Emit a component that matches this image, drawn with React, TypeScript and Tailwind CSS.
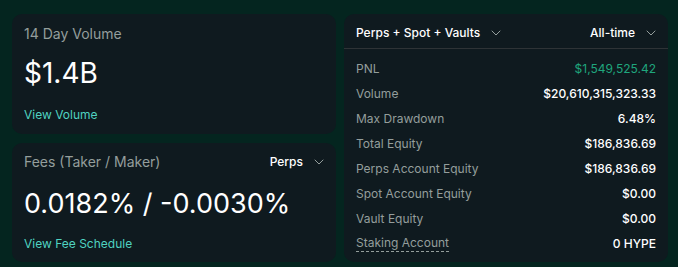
import { ChevronDown } from 'lucide-react';

const FONT = { fontFamily: 'Inter, "Noto Sans", sans-serif' };

interface StatRow {
  label: string;
  value: string;
  tone?: 'green';
  dashed?: boolean;
}

const ROWS: StatRow[] = [
  { label: 'PNL', value: '$1,549,525.42', tone: 'green' },
  { label: 'Volume', value: '$20,610,315,323.33' },
  { label: 'Max Drawdown', value: '6.48%' },
  { label: 'Total Equity', value: '$186,836.69' },
  { label: 'Perps Account Equity', value: '$186,836.69' },
  { label: 'Spot Account Equity', value: '$0.00' },
  { label: 'Vault Equity', value: '$0.00' },
  { label: 'Staking Account', value: '0 HYPE', dashed: true },
];

function Chevron() {
  return <ChevronDown size={16} strokeWidth={1.5} className="ml-2 text-[#949e9c]" />;
}

export default function App() {
  return (
    <div
      className="w-[678px] h-[267px] bg-[#04251f] flex gap-2 pl-3 pt-[14px] overflow-hidden antialiased"
      style={FONT}
    >
      {/* left column */}
      <div className="w-[324px] flex flex-col gap-[9px]">
        <div className="h-[120px] rounded-[10px] bg-[#0f1a1f] px-3 pt-[10px] flex flex-col">
          <div className="text-[14px] leading-5 text-[#949e9c]">14 Day Volume</div>
          <div className="mt-[11px] text-[28px] leading-9 text-white">$1.4B</div>
          <div className="mt-[15px] text-[12px] leading-[18px] text-[#50d2c1]">View Volume</div>
        </div>
        <div className="h-[119px] rounded-[10px] bg-[#0f1a1f] pl-3 pr-[9px] pt-[9px] flex flex-col">
          <div className="flex items-center justify-between">
            <div className="text-[14px] leading-5 text-[#949e9c]">Fees (Taker / Maker)</div>
            <div className="flex items-center text-[12px] font-medium text-white">
              Perps
              <Chevron />
            </div>
          </div>
          <div className="mt-[14px] text-[27px] leading-9 text-white">0.0182% / -0.0030%</div>
          <div className="mt-[13px] text-[12px] leading-[18px] text-[#50d2c1]">View Fee Schedule</div>
        </div>
      </div>

      {/* right card */}
      <div className="w-[324px] h-[248px] rounded-[10px] bg-[#0f1a1f] flex flex-col">
        <div className="h-[35px] pt-[3px] flex items-center justify-between pl-3 pr-[9px] border-b border-[#2e3336] text-[12px] font-medium text-white">
          <div className="flex items-center">
            Perps + Spot + Vaults
            <Chevron />
          </div>
          <div className="flex items-center">
            All-time
            <Chevron />
          </div>
        </div>
        <div className="pt-[7px] px-3 flex flex-col">
          {ROWS.map((r) => (
            <div key={r.label} className="h-[25px] flex items-center justify-between text-[12px]">
              <span
                className={
                  r.dashed
                    ? 'text-[#949e9c] leading-4 border-b border-dashed border-[#949e9c]'
                    : 'text-[#949e9c]'
                }
              >
                {r.label}
              </span>
              <span
                className={
                  r.tone === 'green' ? 'text-[#1fa67d]' : 'font-medium text-white'
                }
              >
                {r.value}
              </span>
            </div>
          ))}
        </div>
      </div>
    </div>
  );
}
